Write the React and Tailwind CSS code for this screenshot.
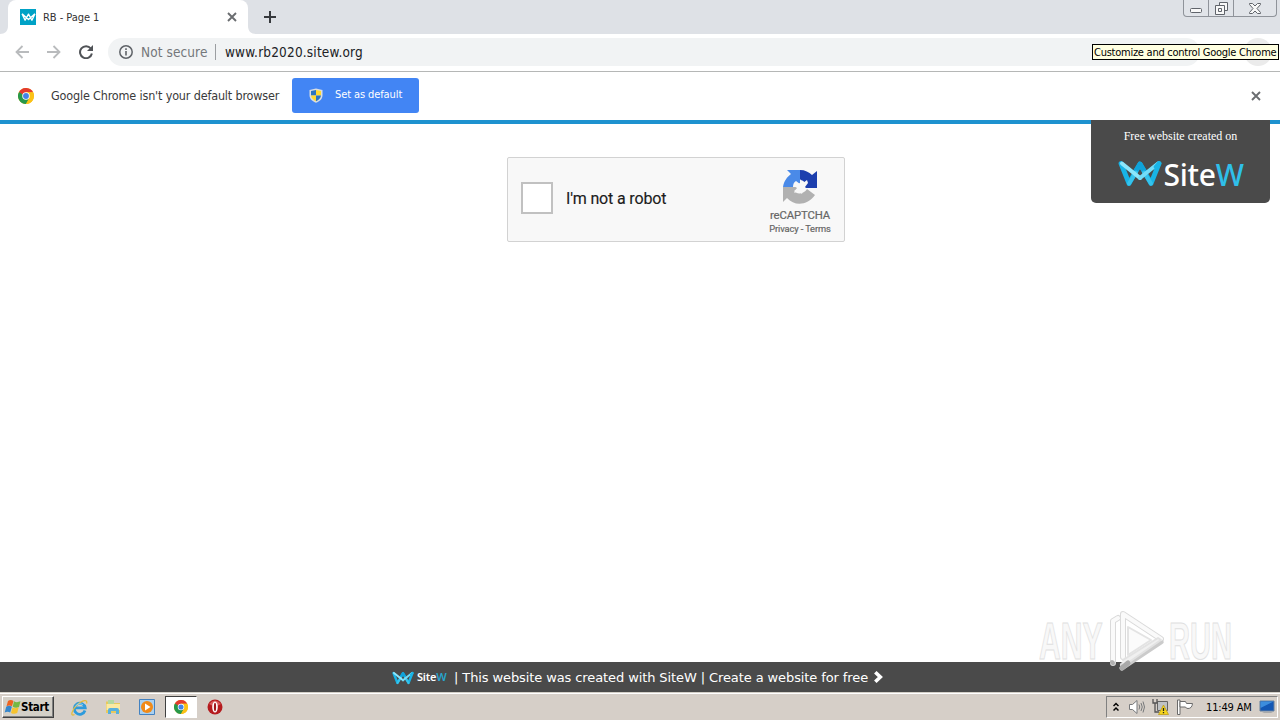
import clsx from 'clsx';

const quickLaunch = [
  { id: 'ie', icon: ExplorerIcon },
  { id: 'files', icon: FolderIcon },
  { id: 'player', icon: PlayerIcon },
  { id: 'chrome', icon: ChromeTaskIcon, active: true },
  { id: 'opera', icon: OperaIcon },
];

export default function App() {
  return (
    <div className="relative flex h-[720px] w-[1280px] flex-col overflow-hidden bg-white font-['DejaVu_Sans_Condensed','DejaVu_Sans',sans-serif] text-[#222]">
      <TabStrip />
      <Toolbar />
      <InfoBar />
      <Page />
      <Footer />
      <Taskbar />
      <Watermark />
    </div>
  );
}

function TabStrip() {
  return (
    <header className="flex h-[34px] shrink-0 items-start bg-[#dee1e6]">
      <svg className="h-[34px] w-2 shrink-0" viewBox="0 0 8 34"><path d="M8 26v8H0c5 0 8-3 8-8z" fill="#fff" /></svg>
      <div className="flex h-[34px] w-[240px] shrink-0 items-center rounded-t-lg bg-white pl-3 pr-[11px]">
        <div className="flex size-4 items-center justify-center bg-[#00a2c6]">
          <svg width="15" height="10" viewBox="0 0 44 27" fill="none" stroke="#fff" strokeWidth="4" strokeLinejoin="round">
            <path d="M3 4l9 19L22 5l10 18 9-19M3 4l19 17L41 4" />
          </svg>
        </div>
        <span className="ml-[7px] pt-px text-[11px] leading-4 tracking-[-0.05px] text-[#333]">RB - Page 1</span>
        <Cross className="ml-auto size-[10px]" />
      </div>
      <svg className="h-[34px] w-2 shrink-0" viewBox="0 0 8 34"><path d="M0 26v8h8c-5 0-8-3-8-8z" fill="#fff" /></svg>
      <svg className="ml-2 mt-[11px]" width="12" height="12" viewBox="0 0 12 12"><path d="M6 0v12M0 6h12" stroke="#36393d" strokeWidth="2" /></svg>
      <div className="ml-auto mr-[3px] flex h-[17px] w-[94px] rounded-b border border-t-0 border-[#8f939a] bg-[#e1e4e9] text-[#60646b]">
        <div className="flex w-[25px] justify-center border-r border-[#8f939a] pt-[8px]">
          <svg width="12" height="5" viewBox="0 0 12 5"><rect x=".5" y=".5" width="11" height="4" rx="1" fill="#f8f8f8" stroke="currentColor" /></svg>
        </div>
        <div className="flex w-[25px] justify-center border-r border-[#8f939a] pt-[2px]">
          <svg width="13" height="13" viewBox="0 0 13 13" fill="#f8f8f8" stroke="currentColor">
            <path d="M4.5.5h8v8h-8z" /><path d="M.5 3.500h9v9h-9z" /><path d="M3.500 6.500h3v3h-3z" />
          </svg>
        </div>
        <div className="flex flex-1 justify-center pr-px pt-[3px]">
          <svg width="12" height="11" viewBox="0 0 12 11"><path d="M.5.5h3L6 3 8.500.5h3v1L8 5.500l3.500 4v1h-3L6 8l-2.500 2.500h-3v-1L4 5.500.5 1.500z" fill="#f8f8f8" stroke="currentColor" /></svg>
        </div>
      </div>
    </header>
  );
}

function Toolbar() {
  return (
    <div className="relative flex h-[38px] shrink-0 items-center border-b border-[#b5b7b6] bg-white pb-[2px] pl-[15px]">
      <svg className="shrink-0" width="14" height="14" viewBox="0 0 14 14" fill="none" stroke="#b9bbbd" strokeWidth="1.8"><path d="M14 7H1.500M7.500 1l-6 6 6 6" /></svg>
      <svg className="ml-[18px] shrink-0" width="14" height="14" viewBox="0 0 14 14" fill="none" stroke="#b9bbbd" strokeWidth="1.8"><path d="M0 7h12.500M6.500 1l6 6-6 6" /></svg>
      <svg className="ml-[18px] shrink-0" width="14" height="14" viewBox="0 0 14 14"><path d="M11.800 3.500A6 6 0 1 0 12.900 8.500" fill="none" stroke="#505357" strokeWidth="2" /><path d="M14 0v6H8z" fill="#505357" /></svg>
      <div className="ml-[15px] flex h-7 w-[1092px] shrink-0 items-center rounded-full bg-[#f1f3f4] pl-[11px]">
        <svg width="14" height="14" viewBox="0 0 14 14"><circle cx="7" cy="7" r="6.200" fill="none" stroke="#5f6368" strokeWidth="1.500" /><path d="M7 6v4.500M7 3.300v1.600" stroke="#5f6368" strokeWidth="1.600" /></svg>
        <span className="ml-2 w-[67px] whitespace-nowrap text-[13.500px] leading-5 tracking-[0.1px] text-[#74777b]">Not secure</span>
        <span className="ml-[7px] h-4 w-px bg-[#9b9ea1]" />
        <span className="ml-[9px] whitespace-nowrap text-[13.500px] leading-5 tracking-[0.18px] text-[#202124]">www.rb2020.sitew.org</span>
      </div>
      <span className="ml-[12px] size-7 shrink-0" />
      <span className="ml-[4px] size-7 shrink-0 rounded-full bg-[#ebebeb]" />
      <div className="absolute left-[1092px] top-[10px] flex h-4 w-[187px] items-center whitespace-nowrap border border-black bg-[#ffffe1] pl-px pt-[2px] text-[11px] tracking-[-0.25px] text-black">
        Customize and control Google Chrome
      </div>
    </div>
  );
}

function InfoBar() {
  return (
    <div className="flex h-12 shrink-0 items-center bg-white pl-[18px]">
      <ChromeIcon size={16} />
      <span className="ml-[17px] w-[229px] whitespace-nowrap text-[12.500px] tracking-[-0.17px] text-[#3a3a3a]">Google Chrome isn't your default browser</span>
      <button className="mb-[2px] ml-3 flex h-[35px] w-[127px] items-center rounded-[3px] bg-[#4285f4] pl-[17px] text-[11px] text-white">
        <svg width="14" height="15" viewBox="0 0 14 15">
          <path d="M7 .5L13.500 2v5c0 4-3 6.500-6.500 7.800C3.500 13.500.5 11 .5 7V2z" fill="#d8dde2" />
          <path d="M7 2v5.500H2V3z" fill="#2b74c0" /><path d="M7 2l5 1v4.500H7z" fill="#ffd92f" />
          <path d="M2 7.500h5v5.800C4.500 12.200 2.300 10.500 2 7.500z" fill="#ffd92f" /><path d="M7 7.500h5c-.3 3-2.500 4.700-5 5.800z" fill="#2b74c0" />
        </svg>
        <span className="ml-[12px] whitespace-nowrap pt-px tracking-[-0.1px]">Set as default</span>
      </button>
      <Cross className="ml-auto mr-[19px] size-[10px]" />
    </div>
  );
}

function Page() {
  return (
    <main className="relative h-[542px] shrink-0 border-t-4 border-[#1e92cf]">
      <div className="ml-[507px] mt-[33px] flex h-[85px] w-[338px] items-center rounded-[2px] border border-[#d2d2d2] bg-[#f8f8f8] pl-[13px] font-[Roboto,sans-serif]">
        <span className="mb-[3px] size-8 border-2 border-[#c1c1c1] bg-white" />
        <span className="mb-[2px] ml-[13px] w-[204px] whitespace-nowrap text-[16px] tracking-[-0.15px] text-[#1c1c1c] [-webkit-text-stroke:0.15px_#1c1c1c]">I'm not a robot</span>
        <div className="flex h-full w-[60px] flex-col items-center pt-[11px] text-[#666]">
          <RecaptchaLogo />
          <span className="mt-[3px] whitespace-nowrap text-[11.300px] leading-[14px] tracking-[-0.1px] [-webkit-text-stroke:0.2px_#666]">reCAPTCHA</span>
          <span className="whitespace-nowrap text-[9.300px] leading-[12px] tracking-[-0.12px] [-webkit-text-stroke:0.2px_#666]">Privacy - Terms</span>
        </div>
      </div>
      <aside className="absolute -top-[4px] right-[10px] flex h-[83px] w-[179px] flex-col items-center rounded-b-[5px] bg-[#4a4a4a] pt-[9px] text-white">
        <span className="whitespace-nowrap font-['Liberation_Serif',serif] text-[12px] leading-[14px]">Free website created on</span>
        <div className="mt-[16px] flex h-8 w-[126px] items-center">
          <SiteWMark className="mb-[4px] h-[27px] w-[44px] shrink-0" />
          <span className="ml-[2px] whitespace-nowrap font-['Noto_Sans',sans-serif] text-[30px] font-medium leading-8 tracking-[-0.3px]">Site<span className="text-[#2fbfe9]">W</span></span>
        </div>
      </aside>
    </main>
  );
}

function Footer() {
  return (
    <footer className="flex h-[30px] shrink-0 items-center bg-[#4a4a4a] pl-[392px] pt-px font-['DejaVu_Sans',sans-serif] text-[13px] text-white">
      <SiteWMark className="h-[14px] w-[22px] shrink-0" />
      <span className="ml-[3px] w-[37px] whitespace-nowrap font-['Noto_Sans',sans-serif] text-[11px] font-semibold tracking-[-0.2px]">Site<span className="text-[#27a6cf]">W</span></span>
      <span className="w-[414px] whitespace-pre tracking-[-0.1px]">| This website was created with SiteW | Create a website for free</span>
      <svg className="ml-[6px] mb-px shrink-0" width="9" height="12" viewBox="0 0 9 12"><path d="M1.300 1.300L6.300 6l-5 4.700" fill="none" stroke="#fff" strokeWidth="3.600" /></svg>
    </footer>
  );
}

function Taskbar() {
  return (
    <div className="flex h-7 shrink-0 items-center border-t border-[#d4d0c8] bg-[#d6cfc8] pt-px text-black shadow-[inset_0_1px_0_#fff]">
      <div className="ml-[2px] flex h-[22px] w-[52px] items-center border border-b-[#404040] border-l-white border-r-[#404040] border-t-white bg-[#d4d0c8] pl-px shadow-[inset_-1px_-1px_0_#808080]">
        <WindowsFlag />
        <span className="whitespace-nowrap pt-px text-[11.500px] font-bold tracking-[-0.3px]">Start</span>
      </div>
      <div className="ml-[9px] flex items-center gap-[2px]">
        {quickLaunch.map(({ id, icon: Icon, active }) => (
          <div key={id} className={clsx('flex h-[22px] w-8 items-center justify-center', active && 'border border-b-white border-l-[#404040] border-r-white border-t-[#404040] bg-white')}>
            <Icon />
          </div>
        ))}
      </div>
      <div className="ml-auto mr-[2px] flex h-[22px] w-[172px] items-center border border-b-white border-l-[#808080] border-r-white border-t-[#808080] pl-[6px]">
        <svg className="shrink-0" width="6" height="10" viewBox="0 0 6 10" fill="none" stroke="#000" strokeWidth="1.500"><path d="M.5 4L3 1.500 5.500 4M.5 8.500L3 6l2.500 2.500" /></svg>
        <SpeakerIcon />
        <NetworkIcon />
        <svg className="ml-[8px] shrink-0" width="16" height="16" viewBox="0 0 16 16" fill="#fff" stroke="#6b6b6b"><path d="M.5 1v14.500H3V1z" /><path d="M3 2.500h5.500l1 2h6q-.5 5-4.500 5-2 0-2.500-1.500H3z" /></svg>
        <span className="ml-[13px] w-[47px] whitespace-nowrap pt-[2px] text-[11px] tracking-[-0.15px]">11:49 AM</span>
        <svg className="ml-[6px] shrink-0" width="16" height="14" viewBox="0 0 16 14"><path d="M1 1h14v10H1z" fill="#1457b4" stroke="#66809c" /><path d="M1.500 1.500h13L1.500 8z" fill="#3d8ddd" /><path d="M5 12h7l2 1H3z" fill="#aaa" /></svg>
      </div>
    </div>
  );
}

function Watermark() {
  return (
    <div className="pointer-events-none absolute left-[1039px] top-[610px] flex h-[62px] w-[196px] items-center font-['Liberation_Sans',sans-serif] text-[52px] font-bold leading-none text-[#f8f8f8] [-webkit-text-stroke:1px_#e0e0e0]">
      <span className="w-[64px]"><span className="inline-block origin-left scale-x-[0.58] whitespace-nowrap">ANY</span></span>
      <svg className="ml-[5px] shrink-0" width="56" height="62" viewBox="0 0 56 62" fill="none" strokeLinejoin="round" strokeLinecap="round">
        <path d="M15 55l37-24M5 53V11l5-3M15 47V4l38 25" stroke="#dadada" strokeWidth="6" />
        <path d="M14 58l39-26" stroke="#cbcbcb" strokeWidth="5" />
        <path d="M5 51V11l5-3M15 47V4l38 25" stroke="#fafafa" strokeWidth="4" />
        <path d="M4 52l1 1" stroke="#b0b0b0" strokeWidth="4" />
        <path d="M15 50l35-22L53 30 14 57" fill="#f0f0f0" stroke="#e2e2e2" strokeWidth="2" />
        <path d="M14 58l6-5" stroke="#a9a9a9" strokeWidth="5" />
        <path d="M20 17v28l23-15z" fill="#fbfbfb" stroke="#e3e3e3" strokeWidth="2" />
      </svg>
      <span className="ml-[5px] w-[63px]"><span className="inline-block origin-left scale-x-[0.56] whitespace-nowrap">RUN</span></span>
    </div>
  );
}

function Cross({ className }) {
  return (
    <svg className={className} viewBox="0 0 10 10"><path d="M1 1l8 8M9 1L1 9" stroke="#6a6d70" strokeWidth="1.900" /></svg>
  );
}

function SiteWMark({ className }) {
  return (
    <svg className={className} viewBox="0 0 44 27" fill="none" strokeLinejoin="round" strokeLinecap="round">
      <path d="M3 3.500l8 20L22 4l11 19.500 8-20" stroke="#18b4e6" strokeWidth="4.800" />
      <path d="M17 12l5-8 5 8" stroke="#0fa3da" strokeWidth="4.800" />
      <path d="M11 23.500l7-11M33 23.500l-7-11" stroke="#36c3ec" strokeWidth="4" />
      <path d="M4 3.500L22 18" stroke="#8ce6fb" strokeWidth="4" />
      <path d="M22 18L40 3.500" stroke="#72dcf7" strokeWidth="4" />
      <path d="M38 7l3-3.500" stroke="#18b4e6" strokeWidth="4.500" />
    </svg>
  );
}

function ChromeIcon({ size }) {
  return (
    <svg className="shrink-0" width={size} height={size} viewBox="0 0 24 24">
      <circle cx="12" cy="12" r="12" fill="#fbc116" />
      <path d="M12 6.500h10.700A12 12 0 0 0 1.600 6L7.200 15z" fill="#e33b2e" />
      <path d="M1.600 6A12 12 0 0 0 12 24l5-9-5-2z" fill="#27984a" />
      <path d="M12 6.500h10.700A12 12 0 0 1 12 24l5-9z" fill="#fbc116" />
      <circle cx="12" cy="12" r="5.600" fill="#fff" /><circle cx="12" cy="12" r="4.400" fill="#4283e8" />
    </svg>
  );
}

function RecaptchaLogo() {
  return (
    <svg width="36" height="37" viewBox="0 0 36 37">
      <path d="M18 1H5l4 4C5 8 2 12 1 18h10c0-3 1-5 3-6l4 3z" fill="#4a8ae8" />
      <path d="M18 1c5 0 9 2 12 5l5-4v17H18l5-5c-1-2-3-3-5-3z" fill="#1d3fae" />
      <path d="M1 18v15l4-4c8 9 21 7 28-3l-8-6c-3 5-10 6-13 2l5-4z" fill="#b1b1b1" />
      <path d="M18 10l3 4 4-3 1 3-3 4 2 2-4 1-1 4-3-3-5 2 3-5-3-2 6-3z" fill="#f8f8f8" />
    </svg>
  );
}

function WindowsFlag() {
  return (
    <svg className="shrink-0" width="17" height="16" viewBox="0 0 17 16">
      <path d="M4 2c2-1.500 4-1 5.500 0L8 7.300C6.500 6.300 4.500 6 2.500 7.200z" fill="#ee6320" />
      <path d="M10 2.300c2 1.200 4 1 6.500 0L15 8c-2 1-4 1-6.300-.2z" fill="#75b843" />
      <path d="M2.200 7.700c2-1.200 4-1 5.700 0L6.200 13.500c-1.500-1-3.500-1.200-5.500 0z" fill="#3586cc" />
      <path d="M8.500 8.300c2 1.200 4 1 6.200 0L13.200 14c-2 1-4 1-6.200-.1z" fill="#f6c32f" />
    </svg>
  );
}

function ExplorerIcon() {
  return (
    <svg width="17" height="17" viewBox="0 0 17 17" fill="none">
      <path d="M14 11.500A5.500 5.500 0 1 1 14.200 8.800H4.500" stroke="#2e9bdc" strokeWidth="2.800" />
      <path d="M3.500 15.500C-1 18 .5 11 6 6S17 0 15.500 4.500" stroke="#e5bc3e" strokeWidth="1.300" />
      <path d="M4.500 7.500C6 4.500 10 4 12 6" stroke="#8dd5f7" />
    </svg>
  );
}

function FolderIcon() {
  return (
    <svg width="17" height="16" viewBox="0 0 17 16">
      <path d="M1 2.500h5L7.500 4H15v10H1z" fill="#e8c95c" /><path d="M3 1h6v4H3z" fill="#b4d8a0" />
      <path d="M1.500 5h13.500v6H1.500z" fill="#fbe9a1" /><path d="M3 15v-4q0-2 2-2h7q2 0 2 2v4h-3v-3H6v3z" fill="#58b0dc" />
    </svg>
  );
}

function PlayerIcon() {
  return (
    <svg width="16" height="16" viewBox="0 0 16 16">
      <path d="M.5.5h15v15H.5z" fill="#a9d0f0" stroke="#4382c1" /><circle cx="8" cy="8" r="6" fill="#f18a17" /><path d="M6 4.500L11.500 8 6 11.500z" fill="#fff" />
    </svg>
  );
}

function ChromeTaskIcon() {
  return <ChromeIcon size={14} />;
}

function OperaIcon() {
  return (
    <svg width="16" height="16" viewBox="0 0 16 16">
      <circle cx="8" cy="8" r="7.500" fill="#b51b1e" /><path d="M2 5q6-7 12 0-6 4-12 0z" fill="#d95c5c" />
      <ellipse cx="8" cy="8" rx="2.800" ry="5.500" fill="#fff" /><ellipse cx="8" cy="8" rx="1.100" ry="4.300" fill="#a1161a" />
    </svg>
  );
}

function SpeakerIcon() {
  return (
    <svg className="ml-[10px] shrink-0" width="17" height="16" viewBox="0 0 17 16" fill="none" stroke="#77797b">
      <path d="M.5 5.500h3l4.500-4v13l-4.500-4h-3z" fill="#fff" /><path d="M10 5.500q1.500 2.500 0 5M12 4q2.500 4 0 8M14 2.500q3 5.500 0 11" />
    </svg>
  );
}

function NetworkIcon() {
  return (
    <svg className="ml-[6px] shrink-0" width="17" height="16" viewBox="0 0 17 16">
      <path d="M5.500 2.500h10v9h-10z" fill="#bfc2c5" stroke="#646464" />
      <path d="M1 0v4h4V0M3 4v9h4" fill="none" stroke="#545454" strokeWidth="1.300" />
      <path d="M11.500 6l5 9.500h-10z" fill="#f5d51d" stroke="#b9960a" strokeWidth=".7" /><path d="M11.500 9v3M11.500 13v1.300" stroke="#222" strokeWidth="1.300" />
    </svg>
  );
}
